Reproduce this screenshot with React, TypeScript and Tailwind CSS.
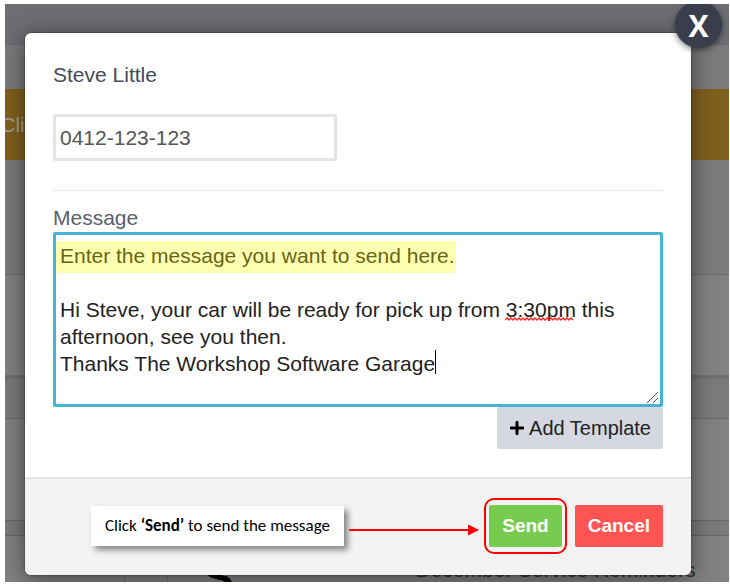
import React, { useState } from "react";
import { FaPlus } from "react-icons/fa";

const initialMessage = `Enter the message you want to send here.

Hi Steve, your car will be ready for pick up from 3:30pm this
afternoon, see you then.
Thanks The Workshop Software Garage`;

// Dimmed dashboard that shows around the edges of the dialog
function PageBehind() {
  return (
    <div className="absolute inset-0 flex flex-col overflow-hidden bg-[#7b7b7b]" aria-hidden="true">
      <div className="h-[41px] shrink-0 bg-[#6d6e72]" />
      <div className="h-11 shrink-0" />
      <div className="flex h-[71px] shrink-0 items-center bg-[#80601e] text-[20px] text-[#a8a098]">
        <span className="-ml-1">Clic</span>
      </div>
      <div className="h-[115px] shrink-0 border-b border-[#6a6a6a]" />
      <div className="h-[104px] shrink-0 border-b-4 border-[#707176] bg-[#828282]" />
      <div className="h-10 shrink-0 border-b border-[#686868]" />
      <div className="h-[102px] shrink-0 border-b border-[#686868] bg-[#828282]" />
      <div className="h-[15px] shrink-0 border-b border-[#686868]" />
      <div className="flex grow items-end bg-[#828282]">
        <div className="h-full w-[120px] border-r border-[#686868]" />
        <div className="h-full w-[43px] border-r border-[#686868]" />
        <div className="flex h-8 items-start gap-[182px] pl-9 whitespace-nowrap">
          <span className="text-[44px] leading-[56px] font-bold text-black">S</span>
          <span className="text-[21px] leading-10 text-[#2c3038]">December Service Reminders</span>
        </div>
      </div>
    </div>
  );
}

function SendCallout() {
  return (
    <div className="flex grow items-center gap-1 font-[Carlito,Lato,sans-serif]">
      <p className="bg-white px-3.5 py-2 text-[17px] leading-6 whitespace-nowrap text-black shadow-[4px_4px_6px_rgba(0,0,0,0.45)]">
        Click <strong>‘Send’</strong> to send the message
      </p>
      <svg className="h-5 w-0 min-w-0 grow" viewBox="0 0 132 20" aria-hidden="true">
        <path d="M1 14H121" stroke="#f00" strokeWidth="2" />
        <path d="M120 8.5L131 14L120 19.5Z" fill="#f00" />
      </svg>
    </div>
  );
}

export default function App() {
  const [phone, setPhone] = useState("0412-123-123");
  const [message, setMessage] = useState(initialMessage);

  return (
    <div className="bg-white pt-1 pr-px pb-[3px] pl-[5px] font-['Liberation_Sans',Arial,sans-serif]">
      <div className="relative overflow-hidden pt-[29px] pr-[38px] pb-[7px] pl-5">
        <PageBehind />
        <div
          role="dialog"
          aria-label="Send message"
          className="relative rounded-md bg-white shadow-[0_0_2px_rgba(0,0,0,0.6),0_4px_24px_rgba(0,0,0,0.5)]"
        >
          <button
            type="button"
            aria-label="Close"
            className="absolute -top-8 -right-[31px] flex size-[47px] items-center justify-center rounded-full bg-[#393d4c] pt-0.5 font-['Open_Sans',sans-serif] text-[30px] leading-none font-bold text-white shadow-[0_2px_6px_rgba(0,0,0,0.5)]"
          >
            X
          </button>

          <div className="p-7">
            <label htmlFor="phone" className="block text-[21px] leading-7 text-[#434a59]">
              Steve Little
            </label>
            <input
              id="phone"
              type="text"
              value={phone}
              onChange={(e) => setPhone(e.target.value)}
              className="mt-[25px] block h-[47px] w-[284px] rounded-xs border-[3px] border-[#e3e4ea] bg-white px-1 text-[21px] text-[#555] outline-none"
            />
            <hr className="mt-[29px] mb-[13px] border-[#e8e8e8]" />

            <label htmlFor="message" className="block text-[21px] leading-7 text-[#5a5f6e]">
              Message
            </label>
            <div className="relative">
              <textarea
                id="message"
                value={message}
                onChange={(e) => setMessage(e.target.value)}
                spellCheck={false}
                className="block h-[175px] w-full resize-none rounded-xs border-[3px] border-[#45b5d3] bg-white px-1 py-[7px] text-[21px] leading-[27px] text-[#222] outline-none"
              />
              <span className="pointer-events-none absolute top-[9px] left-[3px] h-8 w-[400px] bg-[#ffff00]/30" />
              <svg className="absolute top-[85px] left-[452px] h-1 w-[70px]" viewBox="0 0 70 4" aria-hidden="true">
                <path
                  d="M0 3l2-2 2 2 2-2 2 2 2-2 2 2 2-2 2 2 2-2 2 2 2-2 2 2 2-2 2 2 2-2 2 2 2-2 2 2 2-2 2 2 2-2 2 2 2-2 2 2 2-2 2 2 2-2 2 2 2-2 2 2 2-2 2 2 2-2 2 2"
                  fill="none"
                  stroke="#f22"
                  strokeWidth="1.3"
                />
              </svg>
              <span className="absolute top-[118px] left-[382px] h-6 w-px bg-black" />
              <svg className="absolute right-1 bottom-1 size-3" viewBox="0 0 12 12" aria-hidden="true">
                <path d="M0 12L11 1M6 12L11 7" stroke="#555" fill="none" />
              </svg>
            </div>
            <div className="flex justify-end">
              <button
                type="button"
                className="flex h-[42px] items-center gap-1 rounded-xs bg-[#d5d8e1] px-3 text-[20px] text-[#222]"
              >
                <FaPlus className="size-4 text-black" />
                Add Template
              </button>
            </div>
          </div>

          <div className="flex items-center rounded-b-md border-t-2 border-[#e6e6e6] bg-[#f3f3f3] pt-[19px] pr-7 pb-[21px] pl-[66px]">
            <SendCallout />
            <div className="ml-1 rounded-[10px] border-2 border-[#f00] px-[3px] py-[5px]">
              <button
                type="button"
                className="block h-[42px] rounded-xs bg-[#77cc4f] px-[13px] text-[19px] font-bold text-white"
              >
                Send
              </button>
            </div>
            <button
              type="button"
              className="ml-2 h-[42px] rounded-xs bg-[#ff5454] px-[13px] text-[19px] font-bold text-white"
            >
              Cancel
            </button>
          </div>
        </div>
      </div>
    </div>
  );
}
